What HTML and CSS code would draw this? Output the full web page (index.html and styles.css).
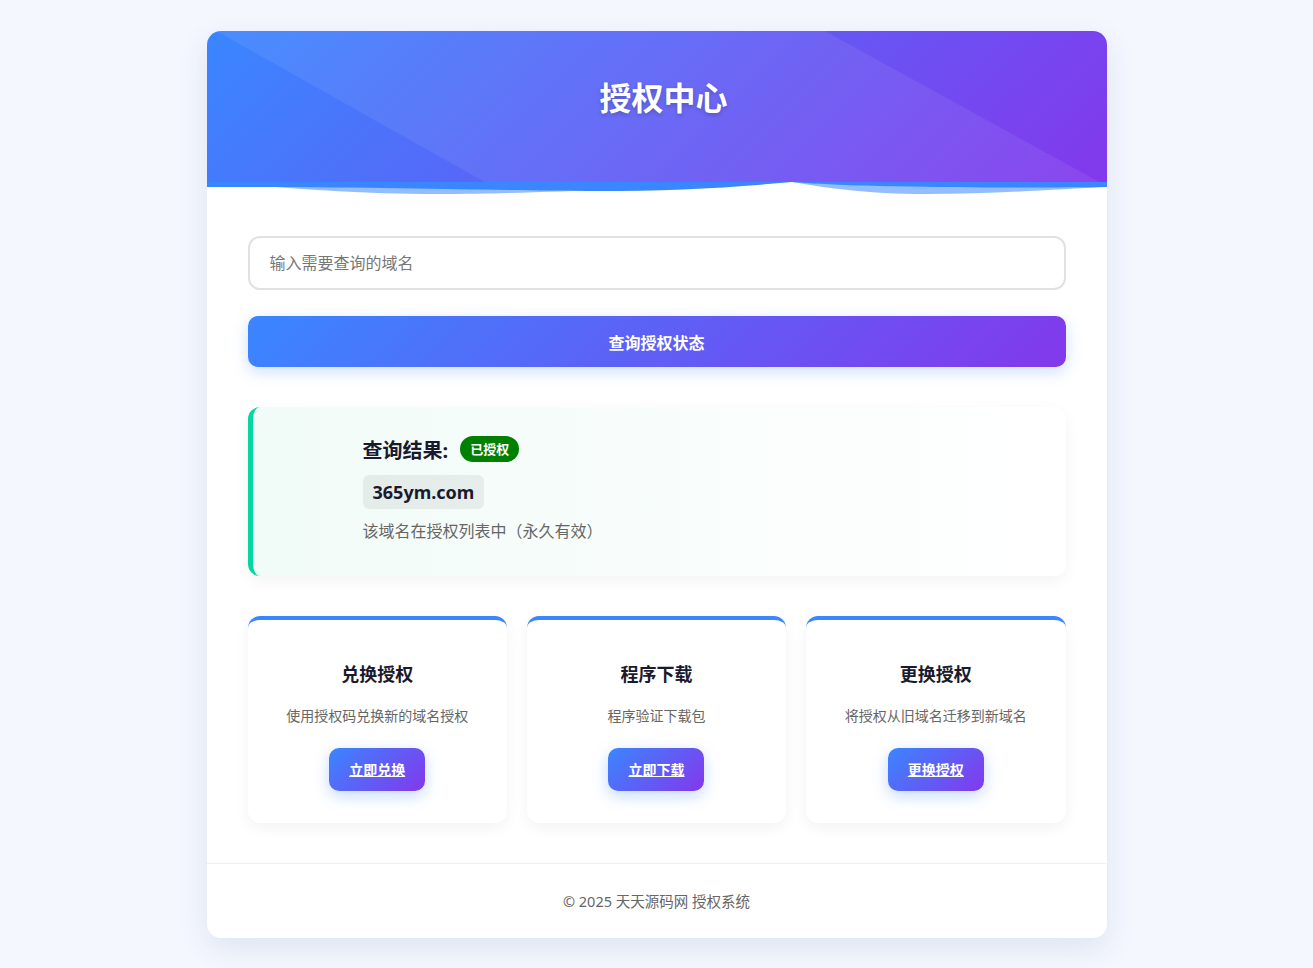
FILE: index.html
```html
<!DOCTYPE html>
<html lang="zh-CN">
<head>
<meta charset="utf-8">
<title>授权中心</title>
<link rel="stylesheet" href="styles.css">
</head>
<body>
<div class="container">
  <header class="header">
    <h1 class="header-title">授权中心</h1>
    <svg class="wave" viewBox="0 0 900 14" preserveAspectRatio="none" aria-hidden="true">
      <path fill="#3a86ff" fill-opacity="0.55" d="M40,3 C100,7 150,12 230,12 C300,12 350,9 400,8 L400,0 L40,0 Z"/>
      <path fill="#3a86ff" fill-opacity="0.55" d="M585,0 C620,6 660,12 720,12 C790,12 850,7 900,5 L900,0 Z"/>
      <path fill="#3a86ff" d="M0,0 H900 V5 C820,6 660,6 585,0 C520,6 460,9 390,9 C300,9 200,5 0,5 Z"/>
    </svg>
  </header>

  <main class="main">
    <input class="domain-input" type="text" placeholder="输入需要查询的域名">
    <button class="query-btn" type="button">查询授权状态</button>

    <section class="result">
      <div class="result-head">
        <span class="result-title">查询结果:</span>
        <span class="badge">已授权</span>
      </div>
      <div class="domain">365ym.com</div>
      <p class="result-text">该域名在授权列表中（永久有效）</p>
    </section>

    <section class="features">
      <div class="feature">
        <h3 class="feature-title">兑换授权</h3>
        <p class="feature-desc">使用授权码兑换新的域名授权</p>
        <a class="feature-btn" href="#">立即兑换</a>
      </div>
      <div class="feature">
        <h3 class="feature-title">程序下载</h3>
        <p class="feature-desc">程序验证下载包</p>
        <a class="feature-btn" href="#">立即下载</a>
      </div>
      <div class="feature">
        <h3 class="feature-title">更换授权</h3>
        <p class="feature-desc">将授权从旧域名迁移到新域名</p>
        <a class="feature-btn" href="#">更换授权</a>
      </div>
    </section>
  </main>

  <footer class="footer">© 2025 天天源码网 授权系统</footer>
</div>
</body>
</html>
```

FILE: styles.css
```css
* {
  box-sizing: border-box;
}

html, body {
  margin: 0;
  padding: 0;
}

body {
  background: #f4f7fe;
  font-family: "Noto Sans", "Noto Sans CJK SC", sans-serif;
  color: #333;
  padding: 31px 0 30px;
}

.container {
  width: 900px;
  margin: 0 auto;
  background: #fff;
  border-radius: 14px;
  box-shadow: 0 10px 30px rgba(40, 60, 120, 0.1);
  overflow: hidden;
}

.header {
  position: relative;
  height: 151px;
  padding-top: 43px;
  padding-left: 14px;
  background: linear-gradient(135deg, #3a86ff 0%, #8338ec 100%);
  text-align: center;
}

.header::before {
  content: "";
  position: absolute;
  inset: 0;
  background: rgba(255, 255, 255, 0.07);
  clip-path: polygon(1.1% 0, 68.7% 0, 99.2% 100%, 30.9% 100%);
}

.header-title {
  position: relative;
  margin: 0;
  font-size: 32px;
  line-height: 48px;
  font-weight: 700;
  color: #fff;
  text-shadow: 0 2px 4px rgba(0, 0, 0, 0.2);
}

.wave {
  position: absolute;
  left: 0;
  top: 100%;
  width: 100%;
  height: 14px;
  display: block;
}

.main {
  padding: 54px 41px 40px;
  display: flex;
  flex-direction: column;
}

.domain-input {
  width: 100%;
  height: 54px;
  padding: 0 20px;
  border: 2px solid #dfe1e5;
  border-radius: 12px;
  font-family: inherit;
  font-size: 16px;
  color: #333;
  outline: none;
  background: #fff;
}

.domain-input::placeholder {
  color: #777;
}

.query-btn {
  margin-top: 26px;
  height: 51px;
  border: none;
  border-radius: 10px;
  background: linear-gradient(135deg, #3a86ff 0%, #8338ec 100%);
  color: #fff;
  font-family: inherit;
  font-size: 16px;
  font-weight: 700;
  box-shadow: 0 5px 15px rgba(58, 134, 255, 0.25);
  cursor: pointer;
}

.result {
  margin-top: 40px;
  padding: 28px 20px 33px 110px;
  border-left: 5px solid #06d6a0;
  border-radius: 12px;
  background: linear-gradient(90deg, #f1fbf8 0%, #ffffff 100%);
  box-shadow: 0 5px 15px rgba(0, 0, 0, 0.05);
}

.result-head {
  display: flex;
  align-items: center;
  gap: 12px;
  height: 28px;
}

.result-title {
  font-size: 20px;
  font-weight: 700;
  color: #1a1a2e;
}

.badge {
  display: inline-block;
  height: 26px;
  line-height: 26px;
  padding: 0 10px;
  border-radius: 13px;
  background: #008000;
  color: #fff;
  font-size: 13px;
  font-weight: 700;
}

.domain {
  display: inline-block;
  align-self: flex-start;
  margin-top: 12px;
  padding: 5px 10px;
  border-radius: 6px;
  background: rgba(0, 0, 0, 0.06);
  font-size: 18px;
  line-height: 24px;
  font-weight: 700;
  color: #1a1a2e;
}

.result-text {
  margin: 10px 0 0;
  font-size: 16px;
  line-height: 24px;
  color: #666;
}

.features {
  margin-top: 40px;
  display: grid;
  grid-template-columns: repeat(3, 1fr);
  gap: 20px;
}

.feature {
  display: flex;
  flex-direction: column;
  align-items: center;
  padding: 40px 15px 32px;
  border-top: 4px solid #3a86ff;
  border-radius: 12px;
  background: #fff;
  box-shadow: 0 5px 15px rgba(0, 0, 0, 0.05);
  text-align: center;
}

.feature-title {
  margin: 0;
  font-size: 18px;
  line-height: 28px;
  font-weight: 700;
  color: #1a1a2e;
}

.feature-desc {
  margin: 18px 0 0;
  font-size: 14px;
  line-height: 20px;
  color: #666;
}

.feature-btn {
  margin-top: 22px;
  padding: 12px 20px;
  border-radius: 10px;
  background: linear-gradient(135deg, #3a86ff 0%, #8338ec 100%);
  color: #fff;
  font-size: 14px;
  line-height: 19px;
  font-weight: 700;
  text-decoration: underline;
  box-shadow: 0 5px 15px rgba(58, 134, 255, 0.3);
}

.footer {
  border-top: 1px solid #f0f0f0;
  padding: 27px 0 27px;
  text-align: center;
  font-size: 14.5px;
  line-height: 20px;
  color: #666;
}
```
